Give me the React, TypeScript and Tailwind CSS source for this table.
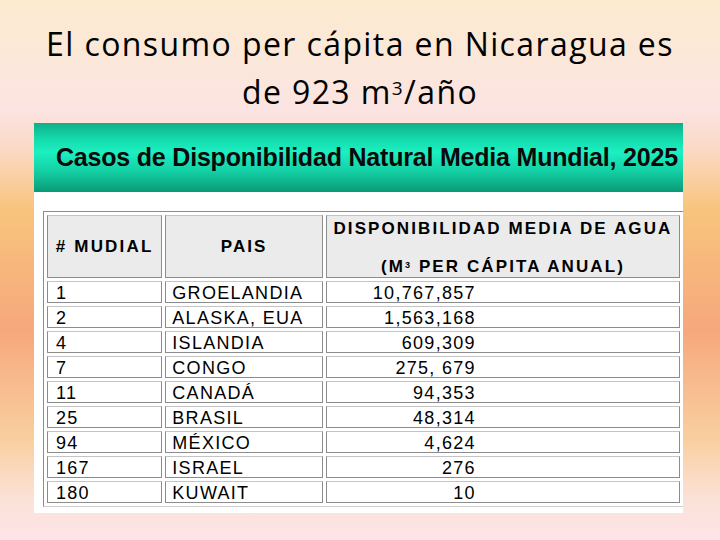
const ROWS = [
  { rank: '1', country: 'GROELANDIA', value: '10,767,857' },
  { rank: '2', country: 'ALASKA, EUA', value: '1,563,168' },
  { rank: '4', country: 'ISLANDIA', value: '609,309' },
  { rank: '7', country: 'CONGO', value: '275, 679' },
  { rank: '11', country: 'CANADÁ', value: '94,353' },
  { rank: '25', country: 'BRASIL', value: '48,314' },
  { rank: '94', country: 'MÉXICO', value: '4,624' },
  { rank: '167', country: 'ISRAEL', value: '276' },
  { rank: '180', country: 'KUWAIT', value: '10' },
];

const cell = 'border border-[#8c8c8c] border-t-[#c4c4c4] p-0';

export default function App() {
  return (
    <div className="h-[540px] w-[720px] overflow-hidden bg-[linear-gradient(180deg,#fcebcf_0px,#fbe4e2_110px,#fbd9c4_150px,#f8c47c_210px,#f6a87c_330px,#f9cfa0_440px,#fbe2d8_500px,#fde4e8_540px)]">
      <h1 className="pt-[20px] text-center font-['Open_Sans',sans-serif] text-[32px] leading-[48px] tracking-[1.4px] text-black">
        El consumo per cápita en Nicaragua es
        <br />
        de 923 m<sup className="text-[19px] leading-none">3</sup>/año
      </h1>

      <div className="ml-[34px] mt-[7px] h-[390px] w-[649px] bg-white">
        <div className="flex h-[69px] items-center bg-[linear-gradient(180deg,#0fae88_0%,#14d9aa_22%,#1cf0c2_42%,#14cfa4_70%,#0a9a76_100%)] pl-[22px]">
          <span className="font-['Liberation_Sans',Arial,sans-serif] text-[25px] font-bold tracking-[-0.2px] text-[#0a0a0a]">
            Casos de Disponibilidad Natural Media Mundial, 2025
          </span>
        </div>

        <div className="pl-[9px] pt-[19px]">
          <table className="border-separate border-spacing-[3px] border-l border-t border-b border-[#8c8c8c] border-b-[#cfcfcf] font-['Liberation_Sans',Arial,sans-serif] text-black">
            <thead>
              <tr className="h-[63px] bg-[#ebebeb]">
                <th className={`${cell} w-[116px] text-[17px] font-bold tracking-[2.2px]`}>
                  # MUDIAL
                </th>
                <th className={`${cell} w-[158px] text-[17px] font-bold tracking-[2px]`}>
                  PAIS
                </th>
                <th className={`${cell} w-[358px] text-[17px] font-bold tracking-[2.1px]`}>
                  <div className="flex h-[61px] flex-col items-center justify-between pb-0 pt-[3px] leading-[20px]">
                    <span>DISPONIBILIDAD MEDIA DE AGUA</span>
                    <span>
                      (M<sup className="text-[9px]">3</sup> PER CÁPITA ANUAL)
                    </span>
                  </div>
                </th>
              </tr>
            </thead>
            <tbody>
              {ROWS.map((r) => (
                <tr key={r.rank} className="h-[22px] text-[18px] leading-[20px] tracking-[1.3px]">
                  <td className={`${cell} pl-[8px]`}>
                    <div className="translate-y-[1px]">{r.rank}</div>
                  </td>
                  <td className={`${cell} pl-[6px]`}>
                    <div className="translate-y-[1px]">{r.country}</div>
                  </td>
                  <td className={cell}>
                    <div className="w-[149px] translate-y-[1px] text-right">{r.value}</div>
                  </td>
                </tr>
              ))}
            </tbody>
          </table>
        </div>
      </div>
    </div>
  );
}
